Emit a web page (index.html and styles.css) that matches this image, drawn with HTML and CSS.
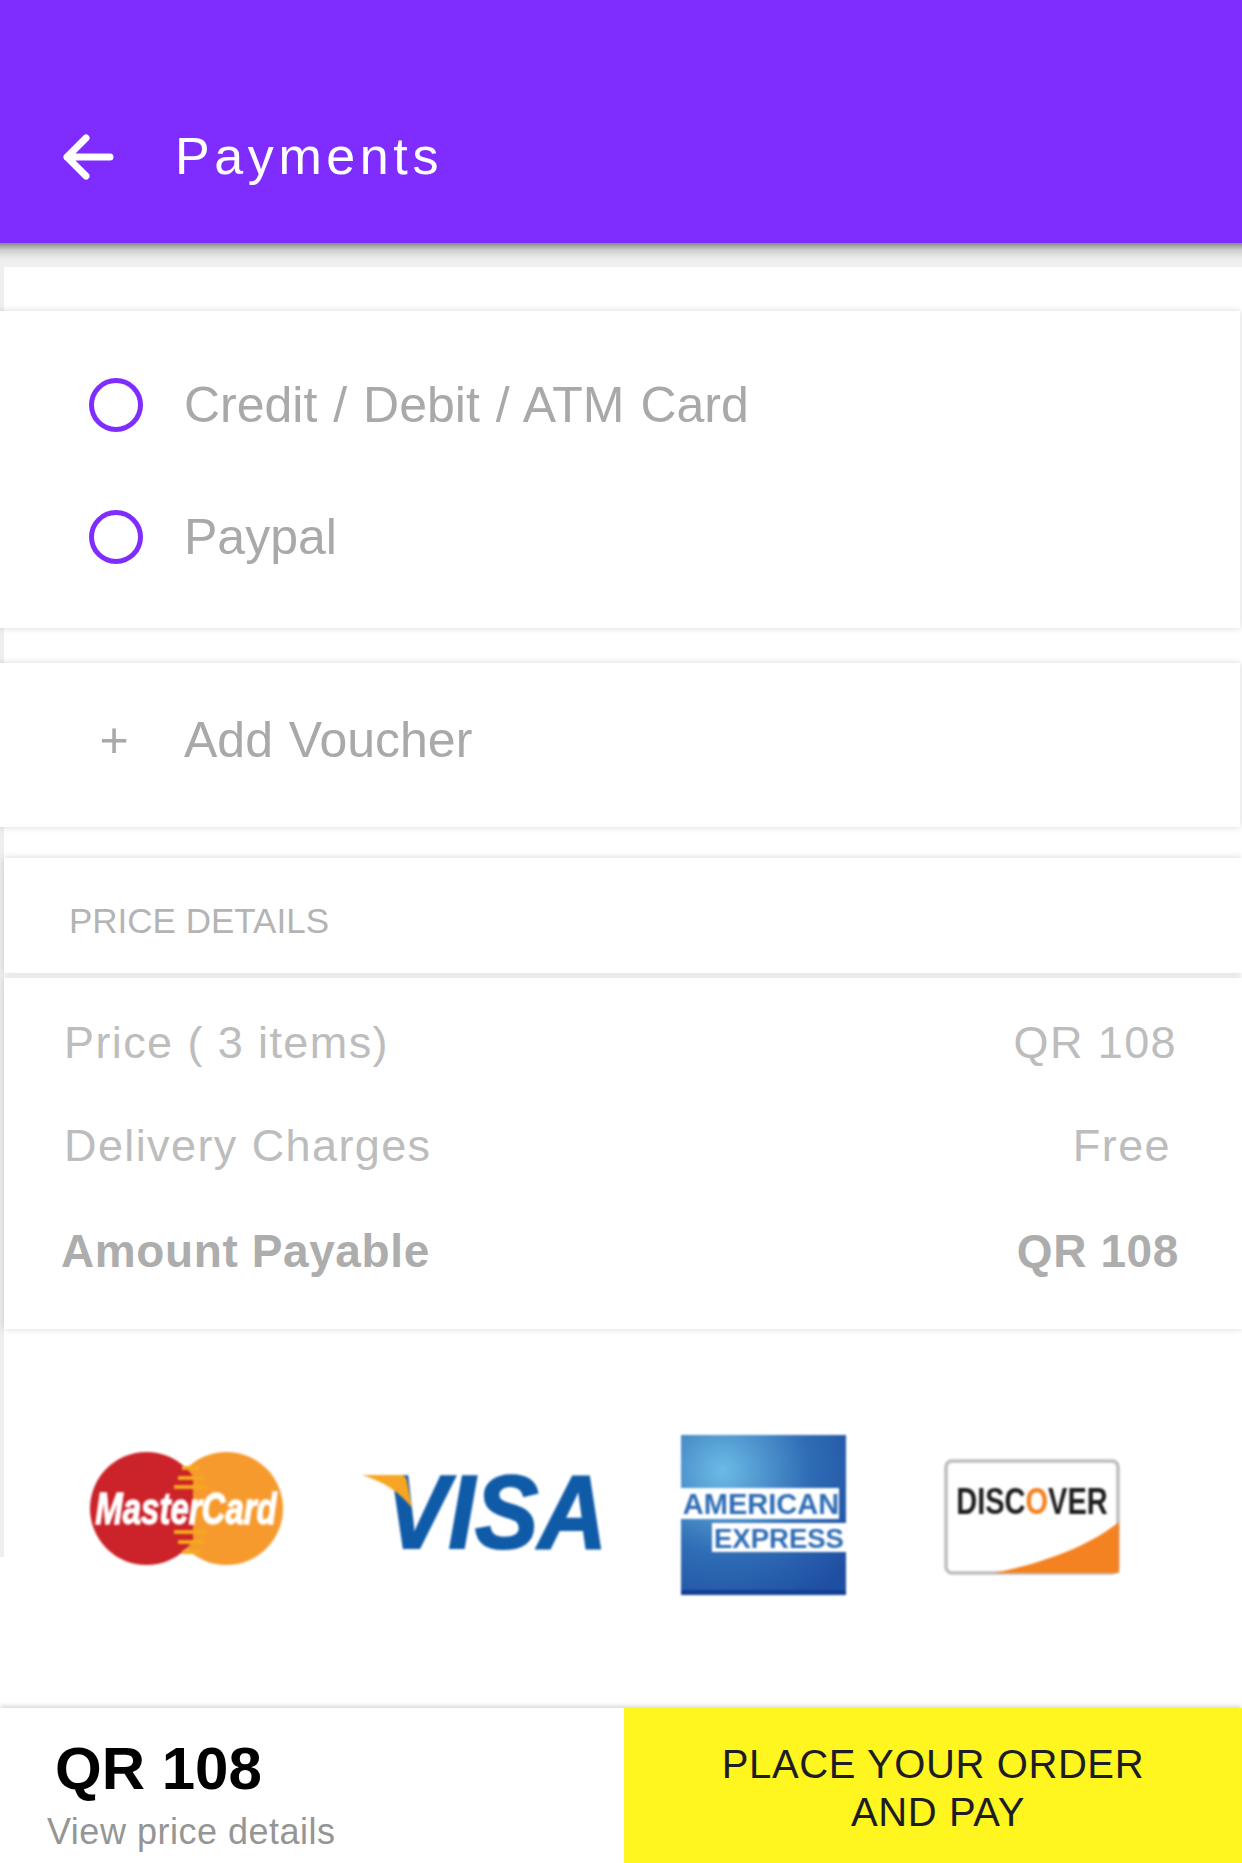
FILE: index.html
```html
<!doctype html>
<html>
<head>
<meta charset="utf-8">
<title>Payments</title>
<link rel="stylesheet" href="styles.css">
</head>

<body>
<div class="page">
	<div class="top">
		<svg class="back" width="52" height="46" viewBox="0 0 52 46">
			<path d="M24 4 L5 23 L24 42 M5 23 H48" fill="none" stroke="#fff" stroke-width="7" stroke-linecap="round" stroke-linejoin="round"/>
		</svg>
		<div class="title">Payments</div>
	</div>
	<div class="top_shadow"></div>

	<div class="content">
		<div class="card card_pay">
			<div class="row"><span class="radio"></span><span class="label">Credit / Debit / ATM Card</span></div>
			<div class="row"><span class="radio"></span><span class="label">Paypal</span></div>
		</div>

		<div class="card card_voucher">
			<div class="row"><span class="plus">+</span><span class="label">Add Voucher</span></div>
		</div>

		<div class="card card_head">PRICE DETAILS</div>
		<div class="card card_price">
			<div class="line"><span>Price ( 3 items)</span><span>QR 108</span></div>
			<div class="line line_free"><span>Delivery Charges</span><span>Free</span></div>
			<div class="line line_total"><span>Amount Payable</span><span>QR 108</span></div>
		</div>

		<div class="logos">
			<svg class="logo logo_mc" width="193" height="113" viewBox="0 0 193 113">
				<defs>
					<clipPath id="mcleft"><rect width="103" height="113"/></clipPath>
				</defs>
				<circle cx="136.500" cy="56.500" r="56.500" fill="#f79a2e"/>
				<circle cx="56.500" cy="56.500" r="56.500" fill="#cc2229" clip-path="url(#mcleft)"/>
				<g fill="#f4a81e">
					<rect x="92" y="14" width="18" height="4"/>
					<rect x="88" y="24" width="26" height="4"/>
					<rect x="84" y="33" width="32" height="4"/>
					<rect x="84" y="78" width="32" height="4"/>
					<rect x="88" y="88" width="26" height="4"/>
					<rect x="92" y="98" width="18" height="4"/>
				</g>
				<text transform="scale(1,1.35)" x="96" y="53" text-anchor="middle" class="mc_text">MasterCard</text>
			</svg>
			<svg class="logo logo_visa" width="250" height="124" viewBox="0 0 250 124">
				<text transform="scale(1,1.09)" x="134" y="92" text-anchor="middle" class="visa_text">VISA</text>
				<path d="M0 27 H38 C42 27 44 29 45 33 L50 60 C38 44 20 33 0 27 Z" fill="#f6a623"/>
			</svg>
			<svg class="logo logo_amex" width="170" height="164" viewBox="0 0 170 164">
				<defs>
					<radialGradient id="amexbg" cx="0.25" cy="0.22" r="0.95">
						<stop offset="0" stop-color="#6cbbe6"/>
						<stop offset="0.55" stop-color="#2f6db5"/>
						<stop offset="1" stop-color="#1f4fa3"/>
					</radialGradient>
				</defs>
				<rect x="2" y="2" width="165" height="160" fill="url(#amexbg)"/>
				<rect x="2" y="157" width="165" height="5" fill="#123f93"/>
				<rect x="2" y="55" width="158" height="31" fill="#fff"/>
				<rect x="33" y="90" width="134" height="29" fill="#fff"/>
				<text x="82" y="81" text-anchor="middle" class="amex_text amex_top">AMERICAN</text>
				<text x="100" y="115" text-anchor="middle" class="amex_text amex_low">EXPRESS</text>
			</svg>
			<svg class="logo logo_disc" width="178" height="118" viewBox="0 0 178 118">
				<rect x="2" y="3" width="172" height="112" rx="6" fill="#fff" stroke="#bdbdbd" stroke-width="3.500"/>
				<path d="M50 115 C100 105 145 88 175 64 V115 Z" fill="#f58220"/>
				<text transform="scale(1,1.28)" x="88" y="44" text-anchor="middle" class="disc_text">DISC<tspan class="disc_o">O</tspan>VER</text>
			</svg>
		</div>
	</div>

	<div class="bottom">
		<div class="total">
			<div class="total_num">QR 108</div>
			<div class="total_link">View price details</div>
		</div>
		<div class="buy">PLACE YOUR ORDER<br><span class="buy2">AND PAY</span></div>
	</div>
</div>
</body>
</html>
```

FILE: styles.css
```css
*{ margin:0; padding:0; box-sizing:border-box;}
html,body{ width:1242px; height:1863px; overflow:hidden; background:#fff;}
body{ font-family:"Liberation Sans", Arial, sans-serif;}
.page{ width:1242px; height:1863px; display:flex; flex-direction:column;}

.top{ flex:none; height:243px; background:#7f2dff; padding:126px 0 0 62px; display:flex; align-items:flex-start; position:relative; z-index:2;}
.back{ margin-top:8px;}
.title{ margin-left:61px; font-size:52px; line-height:60px; letter-spacing:4.6px; color:#fff;}
.top_shadow{ flex:none; height:24px; background:linear-gradient(#8a8a85 0, #d0d0d0 30%, #ececec 65%, #f1f1f1 100%);}

.content{ flex:none; height:1290px; border-left:4px solid #eee;}
.card{ background:#fff; box-shadow:0 0 7px rgba(0,0,0,0.16);}
.card_pay{ margin:44px 2px 0 -4px; height:317px; padding-top:28px;}
.card_voucher{ margin:35px 2px 0 -4px; height:164px; padding-top:33px;}
.row{ height:132px; display:flex; align-items:center; padding-left:89px;}
.card_voucher .row{ height:88px;}
.radio{ width:54px; height:54px; border:5px solid #7f2dff; border-radius:50%;}
.label{ margin-left:41px; font-size:50px; word-spacing:2px; color:#a9a9a9;}
.plus{ width:50px; margin-right:4px; text-align:center; font-size:50px; line-height:50px; color:#a9a9a9;}

.card_head{ margin-top:31px; height:115px; padding:45px 0 0 65px; font-size:35px; line-height:36px; color:#b4b4b4;}
.card_price{ margin-top:5px; height:351px; padding:13px 65px 0 60px;}
.line{ height:103px; display:flex; justify-content:space-between; align-items:center; font-size:45px; letter-spacing:1.4px; color:#bdbdbd;}
.line_free{ padding-right:6px;}
.line_total{ margin:2px -2px 0 -3px; font-size:46px; letter-spacing:.6px; font-weight:bold; color:#adadad;}

.logos{ height:280px; position:relative;}
.logo{ position:absolute; filter:blur(.8px);}
.logo_mc{ left:86px; top:123px;}
.logo_visa{ left:358px; top:119px;}
.logo_amex{ left:675px; top:104px;}
.logo_disc{ left:940px; top:129px;}
.logo_amex{ filter:blur(1.1px);}
.mc_text{ font:italic bold 33px "Liberation Sans", sans-serif; fill:#fff; stroke:#fff; stroke-width:1px;}
.visa_text{ font:italic bold 95px "Liberation Sans", sans-serif; fill:#0f5ba8; stroke:#0f5ba8; stroke-width:2px;}
.amex_text{ font-family:"Liberation Sans", sans-serif; font-weight:bold; fill:#2f6db5;}
.amex_top{ font-size:29px;}
.amex_low{ font-size:27.500px;}
.disc_text{ font:bold 29px "Liberation Sans", sans-serif; fill:#1d1d1d;}
.disc_o{ fill:#f58220;}

.bottom{ margin-top:auto; height:155px; display:flex; box-shadow:0 -2px 5px rgba(0,0,0,0.16); background:#fff; position:relative;}
.total{ width:624px; padding:25px 0 0 47px;}
.total_num{ margin-left:8px; font-size:60px; line-height:72px; font-weight:bold; color:#000;}
.total_link{ margin-top:5px; font-size:36px; line-height:44px; letter-spacing:.5px; color:#959595;}
.buy{ width:618px; background:#fff51f; padding-top:32px; text-align:center; font-size:40px; line-height:48px; letter-spacing:.6px; color:#1d1d26;}
.buy2{ margin-left:10px;}
```
